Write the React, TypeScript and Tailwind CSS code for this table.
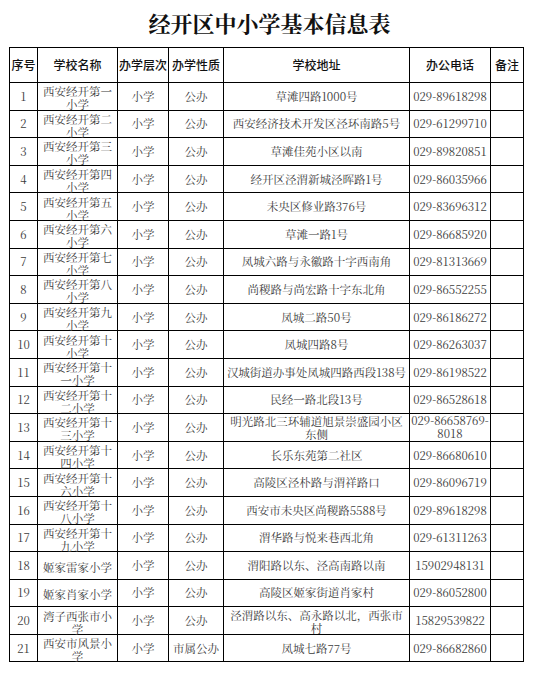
type Row = {
  no: number;
  name: string;
  level: string;
  kind: string;
  addr: string;
  phone: string;
};

const rows: Row[] = [
  { no: 1, name: "西安经开第一\n小学", level: "小学", kind: "公办", addr: "草滩四路1000号", phone: "029-89618298" },
  { no: 2, name: "西安经开第二\n小学", level: "小学", kind: "公办", addr: "西安经济技术开发区泾环南路5号", phone: "029-61299710" },
  { no: 3, name: "西安经开第三\n小学", level: "小学", kind: "公办", addr: "草滩佳苑小区以南", phone: "029-89820851" },
  { no: 4, name: "西安经开第四\n小学", level: "小学", kind: "公办", addr: "经开区泾渭新城泾晖路1号", phone: "029-86035966" },
  { no: 5, name: "西安经开第五\n小学", level: "小学", kind: "公办", addr: "未央区修业路376号", phone: "029-83696312" },
  { no: 6, name: "西安经开第六\n小学", level: "小学", kind: "公办", addr: "草滩一路1号", phone: "029-86685920" },
  { no: 7, name: "西安经开第七\n小学", level: "小学", kind: "公办", addr: "凤城六路与永徽路十字西南角", phone: "029-81313669" },
  { no: 8, name: "西安经开第八\n小学", level: "小学", kind: "公办", addr: "尚稷路与尚宏路十字东北角", phone: "029-86552255" },
  { no: 9, name: "西安经开第九\n小学", level: "小学", kind: "公办", addr: "凤城二路50号", phone: "029-86186272" },
  { no: 10, name: "西安经开第十\n小学", level: "小学", kind: "公办", addr: "凤城四路8号", phone: "029-86263037" },
  { no: 11, name: "西安经开第十\n一小学", level: "小学", kind: "公办", addr: "汉城街道办事处凤城四路西段138号", phone: "029-86198522" },
  { no: 12, name: "西安经开第十\n二小学", level: "小学", kind: "公办", addr: "民经一路北段13号", phone: "029-86528618" },
  { no: 13, name: "西安经开第十\n三小学", level: "小学", kind: "公办", addr: "明光路北三环辅道旭景崇盛园小区\n东侧", phone: "029-86658769-\n8018" },
  { no: 14, name: "西安经开第十\n四小学", level: "小学", kind: "公办", addr: "长乐东苑第二社区", phone: "029-86680610" },
  { no: 15, name: "西安经开第十\n六小学", level: "小学", kind: "公办", addr: "高陵区泾朴路与渭祥路口", phone: "029-86096719" },
  { no: 16, name: "西安经开第十\n八小学", level: "小学", kind: "公办", addr: "西安市未央区尚稷路5588号", phone: "029-89618298" },
  { no: 17, name: "西安经开第十\n九小学", level: "小学", kind: "公办", addr: "渭华路与悦来巷西北角", phone: "029-61311263" },
  { no: 18, name: "姬家雷家小学", level: "小学", kind: "公办", addr: "渭阳路以东、泾高南路以南", phone: "15902948131" },
  { no: 19, name: "姬家肖家小学", level: "小学", kind: "公办", addr: "高陵区姬家街道肖家村", phone: "029-86052800" },
  { no: 20, name: "湾子西张市小\n学", level: "小学", kind: "公办", addr: "泾渭路以东、高永路以北，西张市\n村", phone: "15829539822" },
  { no: 21, name: "西安市风景小\n学", level: "小学", kind: "市属公办", addr: "凤城七路77号", phone: "029-86682860" },
];

const headers = ["序号", "学校名称", "办学层次", "办学性质", "学校地址", "办公电话", "备注"];

const serif = "font-['Noto_Serif_CJK_SC','Liberation_Serif','Noto_Sans_CJK_SC',serif]";

export default function App() {
  return (
    <div className="w-[534px] h-[684px] bg-white">
      <h1
        className={`pt-[10px] pl-[5px] text-center text-[22px] leading-[26px] font-bold text-[#111] ${serif}`}
      >
        经开区中小学基本信息表
      </h1>
      <table className="mt-[11px] ml-[9px] w-[514px] table-fixed border-collapse">
        <colgroup>
          <col className="w-[28px]" />
          <col className="w-[80px]" />
          <col className="w-[51px]" />
          <col className="w-[55px]" />
          <col className="w-[186px]" />
          <col className="w-[81px]" />
          <col className="w-[33px]" />
        </colgroup>
        <thead>
          <tr className="h-[35px]">
            {headers.map((h) => (
              <th
                key={h}
                className="border border-black p-0 text-center align-middle text-[12px] font-medium text-[#111] whitespace-nowrap font-['Noto_Sans_CJK_SC',sans-serif]"
              >
                {h}
              </th>
            ))}
          </tr>
        </thead>
        <tbody className={`text-[11.5px] leading-[13px] text-[#3c3c3c] ${serif}`}>
          {rows.map((r) => (
            <tr key={r.no} className="h-[27.6px]">
              <td className="border border-black p-0 text-center align-middle">{r.no}</td>
              <td className="border border-black p-0 text-center align-middle whitespace-pre">
                <div className="translate-y-[2px]">{r.name}</div>
              </td>
              <td className="border border-black p-0 text-center align-middle">{r.level}</td>
              <td className="border border-black p-0 text-center align-middle whitespace-nowrap">{r.kind}</td>
              <td className="border border-black p-0 text-center align-middle whitespace-pre">
                <div className={r.addr.includes("\n") ? "translate-y-[1px]" : ""}>{r.addr}</div>
              </td>
              <td className="border border-black p-0 text-center align-middle whitespace-pre">{r.phone}</td>
              <td className="border border-black p-0" />
            </tr>
          ))}
        </tbody>
      </table>
    </div>
  );
}
